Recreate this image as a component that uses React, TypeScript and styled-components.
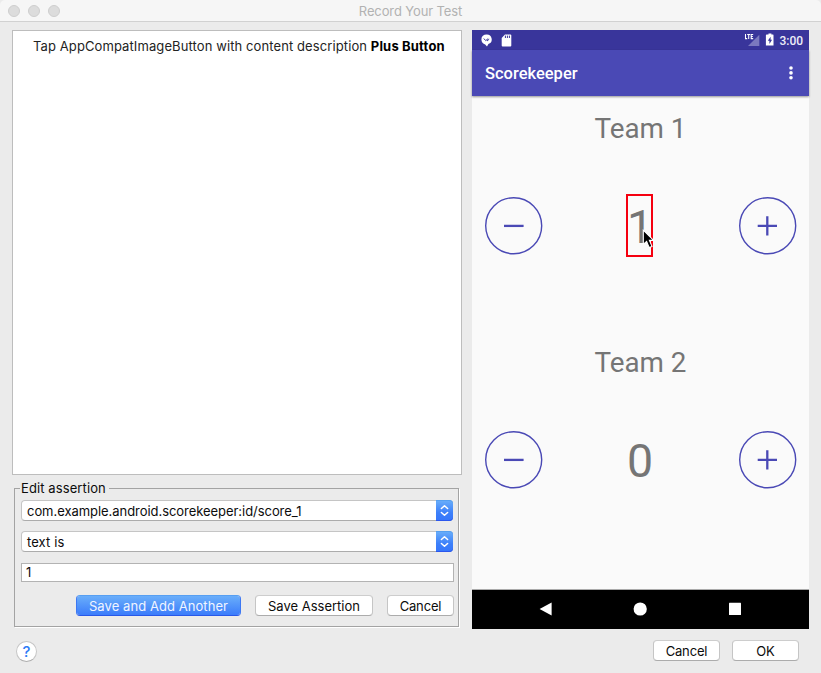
import React from "react";
import styled, { createGlobalStyle } from "styled-components";

const GlobalStyle = createGlobalStyle`
  * { box-sizing: border-box; }
  html, body { margin: 0; padding: 0; background: #ebebeb; }
  body { font-family: Inter, "Liberation Sans", sans-serif; font-size: 13px; color: #0c0c0c; }
`;

const Window = styled.div`
  width: 821px;
  height: 673px;
  display: flex;
  flex-direction: column;
  overflow: hidden;
  background: #ebebeb;
`;

const TitleBar = styled.header`
  height: 22px;
  display: grid;
  grid-template-columns: 1fr auto 1fr;
  align-items: center;
  padding: 0 8px;
  background: #f6f6f6;
  border-bottom: 1px solid #d1d1d1;
  border-radius: 5px 5px 0 0;
`;

const Lights = styled.div`
  display: flex;
  gap: 8px;
`;

const Light = styled.span`
  width: 12px;
  height: 12px;
  border-radius: 50%;
  background: #dcdcdc;
  border: 1px solid #cecece;
`;

const Label = styled.span<{ $spacing?: number; $bold?: boolean }>`
  white-space: pre;
  letter-spacing: ${(p) => p.$spacing ?? 0}px;
  font-weight: ${(p) => (p.$bold ? 700 : 400)};
`;

const Title = styled(Label)`
  color: #b2b2b2;
  line-height: 20px;
`;

const Main = styled.main`
  display: flex;
  gap: 10px;
  padding: 8px 12px 0;
`;

const LeftColumn = styled.section`
  width: 450px;
  display: flex;
  flex-direction: column;
`;

const StepList = styled.div`
  height: 445px;
  background: #fff;
  border: 1px solid #bdbdbd;
  padding: 6px 0 0 20px;
`;

const Step = styled.div`
  display: flex;
  line-height: 18px;
  color: #232323;
  strong { color: #000; }
`;

const Editor = styled.fieldset`
  width: 445px;
  height: 147px;
  margin: 5px 0 0 2px;
  padding: 4px 4px 0 6px;
  border: 1px solid #a3a3a3;
  box-shadow: 1px 1px 0 #fff;
  min-width: 0;
`;

const Legend = styled.legend`
  height: 16px;
  line-height: 17px;
  padding: 0 3px 0 1px;
  margin-left: -1px;
  background: #ebebeb;
`;

const Select = styled.div`
  display: flex;
  width: 432px;
  height: 21px;
  margin-bottom: 10px;
  background: #fff;
  border: 1px solid #c5c5c5;
  border-bottom-color: #acacac;
  border-radius: 4px;
`;

const SelectText = styled.div`
  flex: 1;
  padding-left: 5px;
  line-height: 20px;
`;

const Stepper = styled.div`
  display: grid;
  place-items: center;
  width: 17px;
  height: 21px;
  margin: -1px -1px 0 0;
  border-radius: 0 4px 4px 0;
  background: linear-gradient(#6bb0fa, #3d80fa 60%, #3575fb);
  box-shadow: inset 0 1px 0 #559ff0, inset 0 -1px 0 #2b57ed;
`;

const ValueInput = styled.div`
  width: 433px;
  height: 19px;
  margin-top: 11px;
  padding-left: 4px;
  line-height: 17px;
  background: #fff;
  border: 1px solid #b3b3b3;
`;

const EditorActions = styled.div`
  display: flex;
  justify-content: flex-end;
  gap: 14px;
  padding-top: 13px;
`;

const Button = styled.button<{ $width: number; $primary?: boolean }>`
  width: ${(p) => p.$width}px;
  height: 21px;
  padding: 1px 0 0;
  flex: none;
  display: flex;
  align-items: center;
  justify-content: center;
  font: inherit;
  line-height: 18px;
  border-radius: 4px;
  color: ${(p) => (p.$primary ? "#f0f5ff" : "#0c0c0c")};
  background: ${(p) => (p.$primary ? "linear-gradient(#6aaefa, #3b7cfb)" : "#fff")};
  border: 1px solid;
  border-color: ${(p) => (p.$primary ? "#579ff2 #3d78f3 #2858e8" : "#cdcdcd #c5c5c5 #acacac")};
  background-clip: padding-box;
`;

const Phone = styled.section`
  width: 337px;
  height: 599px;
  display: flex;
  flex-direction: column;
  background: #fafafa;
  font-family: Roboto, "Noto Sans", sans-serif;
`;

const StatusBar = styled.div`
  height: 20px;
  display: flex;
  align-items: center;
  padding: 0 6px 0 9px;
  background: #39359b;
  color: #fff;
`;

const StatusNotices = styled.div`
  display: flex;
  gap: 9px;
  flex: 1;
`;

const StatusIcons = styled.div`
  display: flex;
  gap: 4px;
`;

const Clock = styled.span`
  width: 28px;
  font-size: 12px;
  font-weight: 500;
  line-height: 20px;
  padding: 1px 0 0 4.5px;
  color: #ededf8;
`;

const AppBar = styled.div`
  height: 46px;
  flex: none;
  display: flex;
  align-items: center;
  justify-content: space-between;
  padding: 0 16px 0 13px;
  background: #4a49b5;
  color: #fff;
  box-shadow: 0 1px 2px rgba(0, 0, 0, 0.4);
`;

const AppTitle = styled.h1`
  margin: 0;
  font-size: 16.5px;
  font-weight: 500;
`;

const Scores = styled.div`
  flex: 1;
  display: flex;
  flex-direction: column;
  padding-top: 16px;
  color: #757575;
`;

const Team = styled.div`
  height: 234px;
`;

const TeamName = styled.div`
  text-align: center;
  font-size: 27.8px;
  line-height: 34px;
`;

const ScoreRow = styled.div`
  display: flex;
  justify-content: space-between;
  align-items: center;
  padding: 0 12px 0 13px;
  margin-top: 48px;
  height: 63px;
`;

const Score = styled.div<{ $selected?: boolean }>`
  position: relative;
  width: 27px;
  height: 63px;
  margin: 0 1.5px 0 -1.5px;
  padding-left: 1px;
  display: flex;
  justify-content: center;
  font-size: 46.5px;
  line-height: 66px;
  box-shadow: ${(p) => (p.$selected ? "inset 0 0 0 2px #f5000f" : "none")};
`;

const Pointer = styled.svg`
  position: absolute;
  left: 16px;
  top: 35px;
`;

const NavBar = styled.nav`
  height: 40px;
  display: flex;
  align-items: center;
  justify-content: center;
  padding: 0 2px 2px 0;
  background: #000;
  border-top: 1px solid #aaa;
`;

const Footer = styled.footer`
  display: flex;
  align-items: flex-start;
  gap: 12px;
  padding: 11px 22px 0 16px;
`;

const HelpButton = styled.button`
  width: 21px;
  height: 21px;
  margin: 1px auto 0 0;
  padding: 0;
  border-radius: 50%;
  border: 1px solid #c6c6c6;
  border-bottom-color: #adadad;
  background: #fff;
  color: #2e7bf6;
  font: 500 15px/18px Inter, sans-serif;
`;

function Chevrons() {
  return (
    <svg width="9" height="13" viewBox="0 0 9 13" fill="none" stroke="#fff" strokeWidth="1.5">
      <path d="M1.4 4.5 4.5 1.7 7.6 4.5M1.4 8.5 4.5 11.3 7.6 8.5" strokeLinecap="round" strokeLinejoin="round" />
    </svg>
  );
}

function RoundIcon({ plus }: { plus?: boolean }) {
  return (
    <svg width="58" height="58" viewBox="0 0 58 58" fill="none" stroke="#4a49b5">
      <circle cx="28.7" cy="28.7" r="28" strokeWidth="1.4" />
      <path d={plus ? "M18.7 28.9H38M28.3 19.2V38.5" : "M19 28.9H38.6"} strokeWidth="2.3" />
    </svg>
  );
}

function TeamPanel({ name, score, selected }: { name: string; score: number; selected?: boolean }) {
  return (
    <Team>
      <TeamName>{name}</TeamName>
      <ScoreRow>
        <RoundIcon />
        <Score $selected={selected}>
          {score}
          {selected && (
            <Pointer width="14" height="21" viewBox="0 0 14 21">
              <path d="M1.3 1.2V15.5L4.6 12.4 7.2 18.6 10 17.4 7.4 11.4H11.6Z" fill="#000" stroke="#fff" strokeWidth="1.1" />
            </Pointer>
          )}
        </Score>
        <RoundIcon plus />
      </ScoreRow>
    </Team>
  );
}

export default function App() {
  return (
    <>
      <GlobalStyle />
      <Window>
        <TitleBar>
          <Lights>
            <Light />
            <Light />
            <Light />
          </Lights>
          <Title $spacing={-0.12}>Record Your Test</Title>
        </TitleBar>
        <Main>
          <LeftColumn>
            <StepList>
              <Step>
                <Label $spacing={0.1}>{"Tap AppCompatImageButton with content description "}</Label>
                <Label as="strong" $bold $spacing={0.17}>Plus Button</Label>
              </Step>
            </StepList>
            <Editor>
              <Legend><Label $spacing={0.1}>Edit assertion</Label></Legend>
              <Select>
                <SelectText><Label $spacing={-0.05}>com.example.android.scorekeeper:id/score_1</Label></SelectText>
                <Stepper><Chevrons /></Stepper>
              </Select>
              <Select>
                <SelectText><Label $spacing={0.1}>text is</Label></SelectText>
                <Stepper><Chevrons /></Stepper>
              </Select>
              <ValueInput>1</ValueInput>
              <EditorActions>
                <Button $width={165} $primary><Label $spacing={0.07}>Save and Add Another</Label></Button>
                <Button $width={118}><Label>Save Assertion</Label></Button>
                <Button $width={67}><Label $spacing={-0.15}>Cancel</Label></Button>
              </EditorActions>
            </Editor>
          </LeftColumn>
          <Phone>
            <StatusBar>
              <StatusNotices>
                <svg width="11" height="13" viewBox="0 0 11 13">
                  <path d="M5.5.4A5 5 0 0 0 .4 5.5C.4 8 2 9.8 4.2 10.4L6 12.4 7.4 10.1A5 5 0 0 0 5.5.4Z" fill="#fff" />
                  <path d="M2.8 4.5 4.7 6.6 7.2 4.6M6 7 8.2 5.2" fill="none" stroke="#39359b" strokeWidth="1" />
                </svg>
                <svg width="11" height="13" viewBox="0 0 11 13">
                  <path d="M4 .5H9.3Q10.3.5 10.3 1.5V11.5Q10.3 12.4 9.3 12.4H1.7Q.7 12.4.7 11.5V4Z" fill="#fff" />
                  <path d="M4.4 1.6V4M6.4 1.6V4M8.4 1.6V4" stroke="#39359b" strokeWidth="1" />
                </svg>
              </StatusNotices>
              <StatusIcons>
                <svg width="16" height="14" viewBox="0 0 16 14">
                  <path d="M15.3 1.8V13H4Z" fill="#7b79bf" />
                  <path d="M1.5 1V5.6H3.2M3.2 1.4H6.2M4.7 1.4V6.1M9.2 1.4H7.2V5.6H9.2M7.2 3.5H8.8" fill="none" stroke="#fff" strokeWidth="1.05" />
                </svg>
                <svg width="11" height="14" viewBox="6 0 11 14">
                  <path d="M8.8 1.6H10.5V.6H13.4V1.6H15Q15.5 1.6 15.5 2.2V12.6H7.9V2.2Q7.9 1.6 8.8 1.6Z" fill="#fff" />
                  <path d="M12.6 3.7 9.8 7.7H11.4V11L14.1 6.8H12.6Z" fill="#39359b" />
                </svg>
              </StatusIcons>
              <Clock>3:00</Clock>
            </StatusBar>
            <AppBar>
              <AppTitle>Scorekeeper</AppTitle>
              <svg width="4" height="16" viewBox="0 0 4 16" fill="#fff">
                <circle cx="2" cy="3" r="1.8" />
                <circle cx="2" cy="7.9" r="1.8" />
                <circle cx="2" cy="12.8" r="1.8" />
              </svg>
            </AppBar>
            <Scores>
              <TeamPanel name="Team 1" score={1} selected />
              <TeamPanel name="Team 2" score={0} />
            </Scores>
            <NavBar>
              <svg width="202" height="16" viewBox="0 0 202 16" fill="#fff">
                <path d="M12.6 1.6V14.6L.6 8.1Z" />
                <circle cx="101.2" cy="8" r="6.6" />
                <rect x="190" y="1.8" width="12" height="12.2" rx=".5" />
              </svg>
            </NavBar>
          </Phone>
        </Main>
        <Footer>
          <HelpButton>?</HelpButton>
          <Button $width={67}><Label $spacing={-0.15}>Cancel</Label></Button>
          <Button $width={67}><Label>OK</Label></Button>
        </Footer>
      </Window>
    </>
  );
}
